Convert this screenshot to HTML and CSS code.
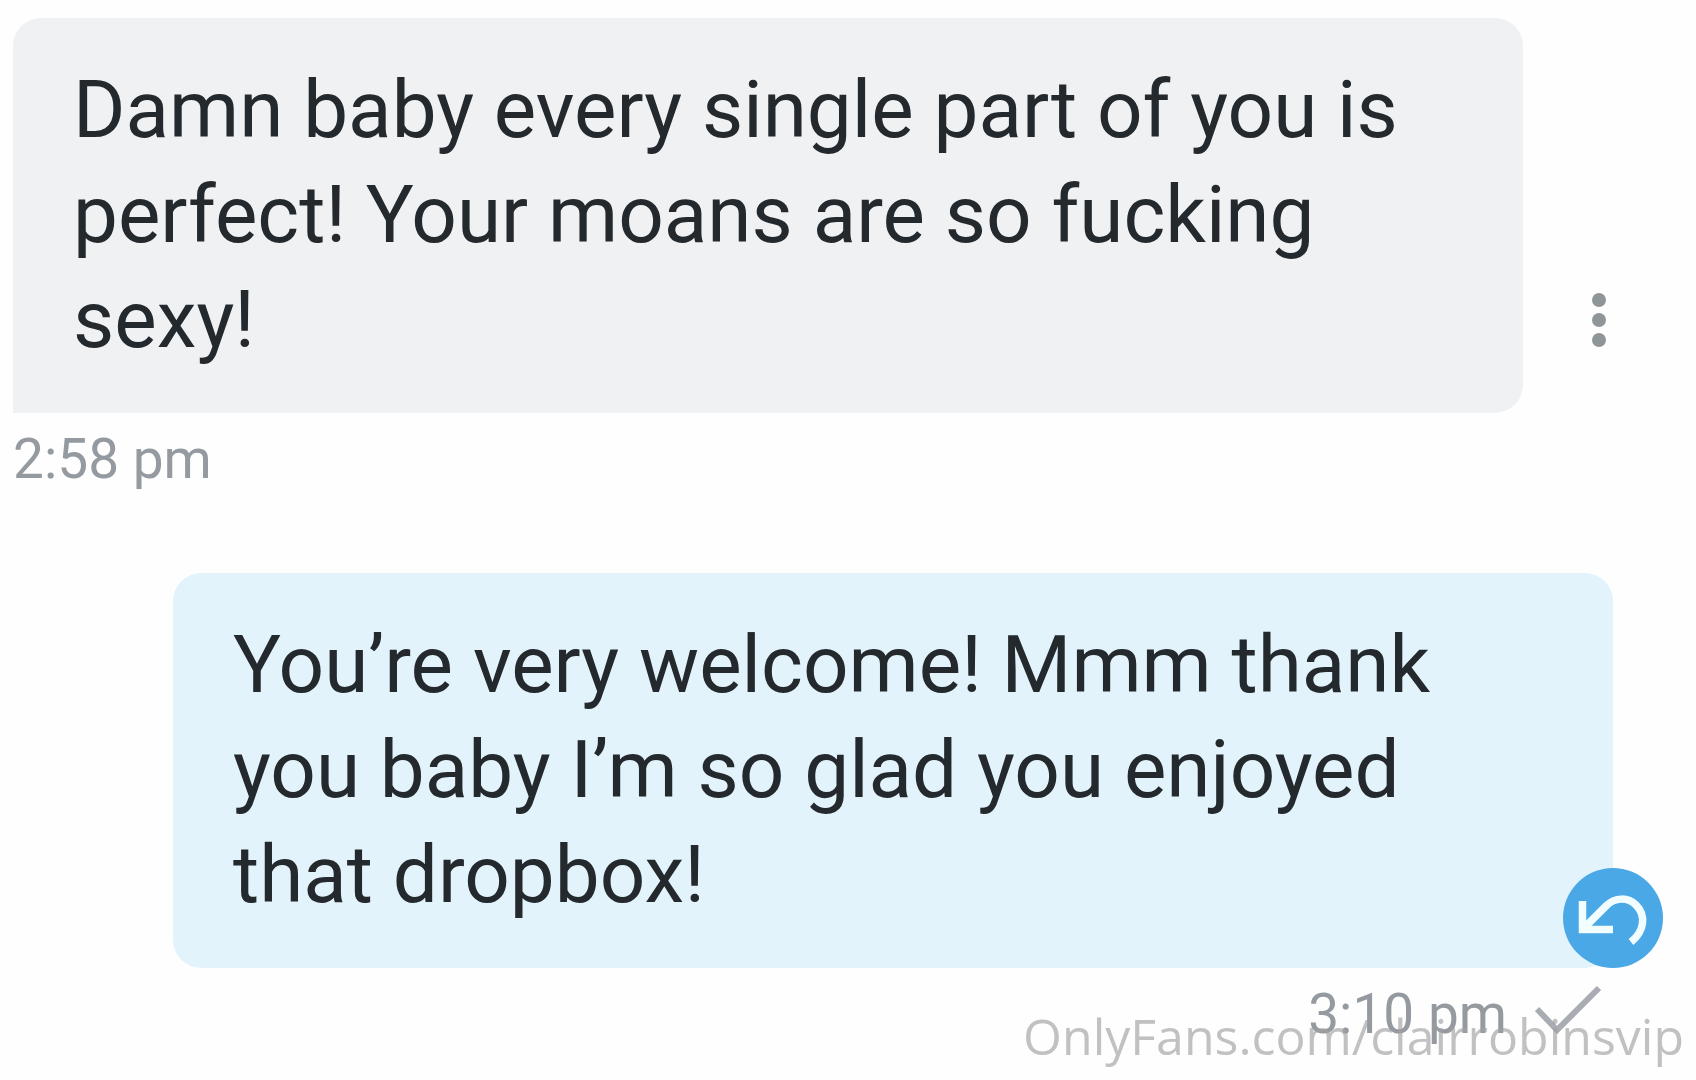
FILE: index.html
```html
<!DOCTYPE html>
<html lang="en">
<head>
<meta charset="utf-8">
<meta name="viewport" content="width=device-width, initial-scale=1">
<title>Messages</title>
<link rel="stylesheet" href="styles.css">
</head>
<body>
<main class="chat">
  <article class="message received">
    <div class="row">
      <p class="bubble">Damn baby every single part of you is perfect! Your moans are so fucking sexy!</p>
      <button class="menu" type="button" aria-label="Message options">
        <svg width="16" height="56" viewBox="0 0 16 56" fill="currentColor" aria-hidden="true">
          <circle cx="8" cy="8" r="7"/><circle cx="8" cy="28" r="7"/><circle cx="8" cy="48" r="7"/>
        </svg>
      </button>
    </div>
    <div class="meta"><time datetime="14:58">2:58 pm</time></div>
  </article>

  <article class="message sent">
    <div class="row">
      <p class="bubble">You’re very welcome! Mmm thank you baby I’m so glad you enjoyed that dropbox!</p>
      <button class="undo" type="button" aria-label="Unsend message">
        <svg width="100" height="100" viewBox="0 0 100 100" fill="none" stroke="currentColor" stroke-width="7.500" aria-hidden="true">
          <path d="M19.500 33V61.500H50"/>
          <path d="M20 61L43 38C52 29 65 29 73 37C83 47 82 63 68 74"/>
        </svg>
      </button>
    </div>
    <div class="meta">
      <time datetime="15:10">3:10 pm</time>
      <svg class="check" width="68" height="58" viewBox="0 0 68 58" fill="none" stroke="currentColor" stroke-width="6" aria-hidden="true">
        <path d="M2 24L22 45L64 3"/>
      </svg>
    </div>
  </article>
  <span class="watermark">OnlyFans.com/clairrobinsvip</span>
</main>
</body>
</html>
```
FILE: styles.css
```css
* {
  box-sizing: border-box;
}

body {
  margin: 0;
  background: #fefefe;
  color: #24292d;
  font-family: Roboto, "Liberation Sans", sans-serif;
}

button {
  border: 0;
  padding: 0;
  cursor: pointer;
}

svg {
  display: block;
}

.chat {
  position: relative;
  display: flex;
  flex-direction: column;
  gap: 80px;
  min-height: 100vh;
  padding: 18px 22px 14px 13px;
}

.row {
  position: relative;
  display: flex;
}

.bubble {
  flex: 1;
  margin: 0;
  padding: 40px 60px;
  border-radius: 28px;
  font-size: 80px;
  line-height: 105px;
}

.received .bubble {
  background: #f0f1f3;
  border-bottom-left-radius: 0;
}

.menu {
  display: grid;
  place-items: center;
  align-self: flex-end;
  width: 151px;
  height: 186px;
  background: none;
  color: #8f9697;
}

.sent {
  padding: 0 61px 0 160px;
}

.sent .bubble {
  background: #e2f3fc;
}

.undo {
  position: absolute;
  right: -50px;
  bottom: 0;
  width: 100px;
  height: 100px;
  border-radius: 50%;
  background: #4aa8e6;
  color: #f2fdff;
}

.meta {
  display: flex;
  align-items: center;
  gap: 28px;
  padding-top: 12px;
  color: #949a9f;
  font-size: 55px;
  line-height: 68px;
}

.sent .meta {
  justify-content: flex-end;
  padding-right: 10px;
}

.check {
  color: #a9acb2;
}

.watermark {
  position: absolute;
  right: 12px;
  bottom: 14px;
  color: rgba(160, 160, 160, 0.65);
  font-family: "Open Sans", "Noto Sans", sans-serif;
  font-size: 50px;
  line-height: 60px;
}
```
